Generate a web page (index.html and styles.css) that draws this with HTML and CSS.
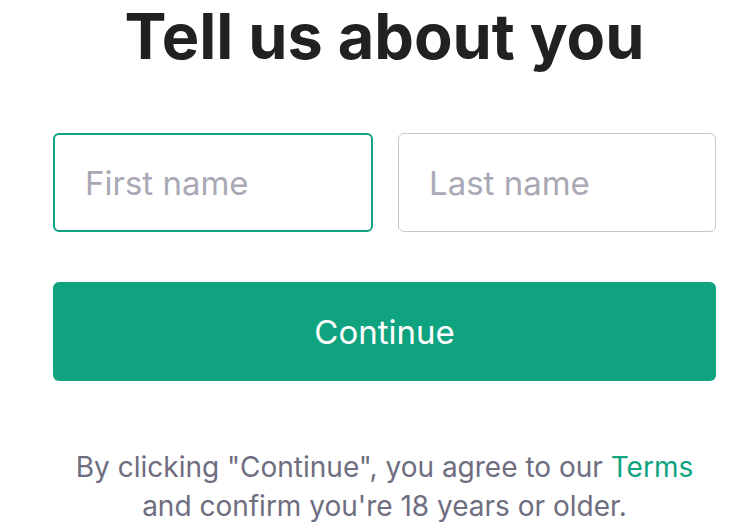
FILE: index.html
```html
<!DOCTYPE html>
<html lang="en">
<head>
  <meta charset="UTF-8" />
  <title>Tell us about you</title>
  <link rel="stylesheet" href="styles.css">
</head>
<body>
  <main class="card">
    <h1>Tell us about you</h1>

    <form class="about-form">
      <div class="name-row">
        <input type="text" class="field active" placeholder="First name" autofocus />
        <input type="text" class="field" placeholder="Last name" />
      </div>
      <button type="submit" class="continue">Continue</button>
    </form>

    <p class="legal">
      By clicking "Continue", you agree to our <a href="#">Terms</a><br>
      and confirm you're 18 years or older.
    </p>
  </main>
</body>
</html>
```

FILE: styles.css
```css
body {
  font-family: Inter, 'Noto Sans', sans-serif;
  background-color: #fff;
  color: #202123;
  margin: 0;
  padding: 0;
}

.card {
  width: 663px;
  margin-left: 53px;
  text-align: center;
}

h1 {
  margin: 0;
  font-size: 63px;
  font-weight: 700;
  line-height: 72px;
  color: #202123;
}

.about-form {
  margin-top: 61px;
}

.name-row {
  display: flex;
  gap: 25px;
}

.field {
  flex: 1;
  min-width: 0;
  height: 99px;
  box-sizing: border-box;
  padding: 0 30px;
  border: 1px solid #c2c8d0;
  border-radius: 6px;
  font-family: inherit;
  font-size: 33px;
  color: #202123;
  caret-color: #202123;
  background-color: #fff;
  outline: none;
}

.field.active {
  border: 2px solid #10a37f;
}

.field::placeholder {
  color: #a9a9b6;
}

.continue {
  display: block;
  width: 100%;
  height: 99px;
  margin-top: 50px;
  background-color: #10a37f;
  color: #fff;
  border: none;
  border-radius: 6px;
  font-family: inherit;
  font-size: 33px;
  cursor: pointer;
}

.legal {
  margin: 67px 0 0 0;
  font-size: 28px;
  line-height: 39px;
  color: #6e6e80;
}

.legal a {
  color: #10a37f;
  text-decoration: none;
}
```
